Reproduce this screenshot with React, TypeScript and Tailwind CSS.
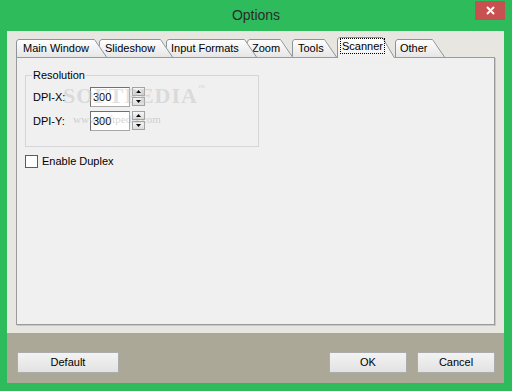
import React from "react";

type Tab = { label: string; w: number; cls: string; tl: string; selected?: boolean };

const tabs: Tab[] = [
  { label: "Main Window", w: 91, cls: "z-[7]", tl: "pl-[7px]" },
  { label: "Slideshow", w: 74, cls: "z-[6] -ml-[8px]", tl: "pl-[6px]" },
  { label: "Input Formats", w: 91, cls: "z-[5] -ml-[7px]", tl: "pl-[5px]" },
  { label: "Zoom", w: 46, cls: "z-[4] -ml-[10px]", tl: "pl-[5px]" },
  { label: "Tools", w: 45, cls: "z-[3] -ml-[1px]", tl: "pl-[6px]" },
  { label: "Scanner", w: 58, cls: "z-[10] -mb-px", tl: "pl-[3px]", selected: true },
  { label: "Other", w: 50, cls: "z-[1]", tl: "pl-[5px]" },
];

function TabShape({ w, h, selected, id }: { w: number; h: number; selected?: boolean; id: string }) {
  const s = 12;
  const fill = `M0,${h} L0,3 Q0,0 3,0 L${w - s},0 L${w},${h} Z`;
  const stroke = `M0.5,${h} L0.5,3 Q0.5,0.5 3,0.5 L${w - s - 0.5},0.5 L${w - 0.5},${h}`;
  return (
    <svg className="absolute inset-0" width={w} height={h} viewBox={`0 0 ${w} ${h}`}>
      <defs>
        <linearGradient id={id} x1="0" y1="0" x2="0" y2="1">
          <stop offset="0" stopColor="#ffffff" />
          <stop offset="1" stopColor={selected ? "#f0f0f0" : "#e6e6e6"} />
        </linearGradient>
      </defs>
      <path d={fill} fill={`url(#${id})`} />
      <path d={stroke} fill="none" stroke="#8d9396" strokeWidth="1" />
    </svg>
  );
}

function Spinner() {
  const half =
    "relative flex h-[9px] w-[13px] items-center justify-center border border-[#a3a3a3] bg-gradient-to-b from-[#f6f6f6] to-[#dcdcdc]";
  return (
    <div className="ml-[2px] flex flex-col self-start">
      <div className={half}>
        <svg width="5" height="3" viewBox="0 0 5 3">
          <path d="M0,3 L2.5,0 L5,3 Z" fill="#000" />
        </svg>
      </div>
      <div className={half + " mt-px"}>
        <svg width="5" height="3" viewBox="0 0 5 3">
          <path d="M0,0 L5,0 L2.5,3 Z" fill="#000" />
        </svg>
      </div>
    </div>
  );
}

function Row({ label, value }: { label: string; value: string }) {
  return (
    <div className="flex h-[20px] items-center">
      <span className="w-[57px]">{label}</span>
      <div className="flex h-[20px] w-[40px] items-center border border-[#a9a9a9] border-l-[#707070] border-t-[#707070] bg-white pl-[2px]">
        {value}
      </div>
      <Spinner />
    </div>
  );
}

function Button({ label, w }: { label: string; w: string }) {
  return (
    <div
      className={`flex h-[21px] ${w} items-center justify-center border border-[#acacac] bg-gradient-to-b from-[#f3f3f3] to-[#e2e2e2] text-black`}
    >
      {label}
    </div>
  );
}

export default function App() {
  return (
    <div
      className="flex h-[391px] w-[512px] flex-col bg-[#2dbb5c] text-[11px] leading-[13px] text-black"
      style={{ fontFamily: '"Liberation Sans", Arial, sans-serif' }}
    >
      {/* Title bar */}
      <div className="flex h-[31px]">
        <div className="flex-1" />
        <div className="self-center pb-[1px] text-[14px] leading-[18px] text-[#2b2b2b]">Options</div>
        <div className="flex flex-1 justify-end">
          <div className="mr-[7px] mt-[1px] flex h-[19px] w-[30px] items-center justify-center bg-[#c75050]">
            <svg width="9" height="9" viewBox="0 0 9 9">
              <path d="M1,1 L8,8 M8,1 L1,8" stroke="#fff" strokeWidth="2" />
            </svg>
          </div>
        </div>
      </div>

      {/* Client area */}
      <div className="ml-[7px] flex h-[352px] w-[497px] flex-col bg-[#e7e6e1]">
        <div className="flex flex-col px-[9px] pt-[6px]">
          {/* Tab strip */}
          <div className="flex h-[20px] items-end">
            {tabs.map((t, i) => {
              const h = t.selected ? 21 : 18;
              return (
                <div
                  key={t.label}
                  className={`relative flex shrink-0 items-center ${t.selected ? "h-[21px] pb-[2px]" : "h-[18px]"} ${t.cls}`}
                  style={{ width: t.w }}
                >
                  <TabShape w={t.w} h={h} selected={t.selected} id={`tg${i}`} />
                  <span
                    className={`relative ${t.tl} ${t.selected ? "" : "pt-[1px]"}`}
                  >
                    {t.selected ? (
                      <span className="border border-dotted border-black px-[1px] py-px">{t.label}</span>
                    ) : (
                      t.label
                    )}
                  </span>
                </div>
              );
            })}
          </div>

          {/* Panel */}
          <div className="relative flex h-[268px] w-[479px] flex-col border border-[#999c9e] bg-[#f0f0f0] shadow-[1px_1px_0_#c9c8c2]">
            <div className="relative ml-[8px] mt-[17px] h-[72px] w-[234px] border border-[#d6d6d6] pl-[7px] pt-[11px]">
              <span className="absolute -top-[7px] left-[6px] bg-[#f0f0f0] px-[1px]">Resolution</span>
              <div className="flex flex-col gap-[4px]">
                <Row label="DPI-X:" value="300" />
                <Row label="DPI-Y:" value="300" />
              </div>
            </div>

            <div className="ml-[8px] mt-[8px] flex items-center">
              <div className="h-[13px] w-[13px] border border-[#5c5c5c] bg-white" />
              <span className="ml-[4px]">Enable Duplex</span>
            </div>

            {/* watermark */}
            <div
              className="pointer-events-none absolute left-[46px] top-[27px] text-[22px] leading-[22px] font-bold tracking-[1px] text-[rgba(190,190,190,0.45)]"
              style={{ fontFamily: '"Liberation Serif", serif' }}
            >
              SOFTPEDIA<span className="align-top text-[7px] leading-[7px]">™</span>
            </div>
            <div
              className="pointer-events-none absolute left-[56px] top-[56px] text-[11px] leading-[11px] text-[rgba(170,170,170,0.5)]"
              style={{ fontFamily: '"Liberation Serif", serif' }}
            >
              www.softpedia.com
            </div>
          </div>
        </div>

        {/* Button bar */}
        <div className="mt-[8px] flex h-[50px] bg-[#aba898] pt-[19px]">
          <div className="ml-[10px]">
            <Button label="Default" w="w-[102px]" />
          </div>
          <div className="flex-1" />
          <div className="mr-[9px] flex gap-[10px]">
            <Button label="OK" w="w-[78px]" />
            <Button label="Cancel" w="w-[78px]" />
          </div>
        </div>
      </div>
    </div>
  );
}
